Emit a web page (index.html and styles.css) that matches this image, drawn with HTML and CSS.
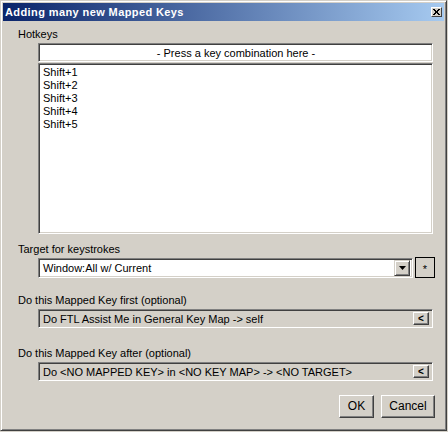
FILE: index.html
```
<!DOCTYPE html>
<html lang="en">
<head>
    <meta charset="UTF-8">
    <title>Adding many new Mapped Keys</title>
    <link rel="stylesheet" href="styles.css">
</head>
<body>
    <div class="window">
        <div class="titlebar">
            <span class="title">Adding many new Mapped Keys</span>
            <span class="close-btn">
                <svg width="7" height="6" viewBox="0 0 7 6">
                    <path d="M0 0 L6 6 M1 0 L7 6 M6 0 L0 6 M7 0 L1 6" stroke="#000" stroke-width="1"/>
                </svg>
            </span>
        </div>

        <div class="content">
            <div class="label hotkeys-label">Hotkeys</div>
            <div class="field white center">- Press a key combination here -</div>
            <div class="listbox">
                <div>Shift+1</div>
                <div>Shift+2</div>
                <div>Shift+3</div>
                <div>Shift+4</div>
                <div>Shift+5</div>
            </div>

            <div class="label target-label">Target for keystrokes</div>
            <div class="combo-row">
                <div class="field white combo">
                    <span class="field-text">Window:All w/ Current</span>
                    <span class="drop-btn">
                        <svg width="7" height="4" viewBox="0 0 7 4"><path d="M0 0 H7 L3.5 4 Z" fill="#000"/></svg>
                    </span>
                </div>
                <div class="plus-btn">*</div>
            </div>

            <div class="label first-label">Do this Mapped Key first (optional)</div>
            <div class="field gray">
                <span class="field-text">Do FTL Assist Me in General Key Map -&gt; self</span>
                <span class="mini-btn">&lt;</span>
            </div>

            <div class="label after-label">Do this Mapped Key after (optional)</div>
            <div class="field gray">
                <span class="field-text">Do &lt;NO MAPPED KEY&gt; in &lt;NO KEY MAP&gt; -&gt; &lt;NO TARGET&gt;</span>
                <span class="mini-btn">&lt;</span>
            </div>

            <div class="buttons">
                <div class="button ok">OK</div>
                <div class="button cancel">Cancel</div>
            </div>
        </div>
    </div>
</body>
</html>
```

FILE: styles.css
```
* {
    box-sizing: border-box;
}
body {
    margin: 0;
    background: #d4d0c8;
    font-family: "Liberation Sans", Arial, sans-serif;
    font-size: 11px;
    color: #000;
}
.window {
    width: 447px;
    height: 431px;
    background: #d4d0c8;
    border: 1px solid;
    border-color: #d4d0c8 #404040 #404040 #d4d0c8;
    box-shadow: inset 1px 1px 0 #fff, inset -1px -1px 0 #808080;
    padding: 2px;
}
.titlebar {
    height: 18px;
    display: flex;
    align-items: center;
    justify-content: space-between;
    padding: 0 2px 0 2px;
    background: linear-gradient(to right, #0a246a, #a6caf0);
}
.title {
    color: #fff;
    font-weight: bold;
    font-size: 11px;
    letter-spacing: 0.4px;
}
.close-btn {
    width: 11px;
    height: 10px;
    display: flex;
    align-items: center;
    justify-content: center;
    background: #d4d0c8;
    border: 1px solid;
    border-color: #fff #404040 #404040 #fff;
}
.content {
    padding: 0 11px 0 15px;
}
.label {
    height: 13px;
    line-height: 13px;
    margin-bottom: 2px;
}
.hotkeys-label {
    margin-top: 7px;
}
.target-label {
    margin-top: 9px;
}
.first-label {
    margin-top: 16px;
}
.after-label {
    margin-top: 19px;
}
.field {
    height: 19px;
    margin-left: 20px;
    display: flex;
    align-items: center;
    border: 1px solid;
    border-color: #808080 #fff #fff #808080;
    box-shadow: inset 1px 1px 0 #404040, inset -1px -1px 0 #d4d0c8;
    padding: 0 3px 0 4px;
    white-space: nowrap;
    overflow: hidden;
}
.field.white {
    background: #fff;
}
.field.gray {
    background: #d4d0c8;
    justify-content: space-between;
}
.field.center {
    justify-content: center;
}
.listbox {
    height: 171px;
    margin: 1px 0 0 20px;
    background: #fff;
    border: 1px solid;
    border-color: #808080 #fff #fff #808080;
    box-shadow: inset 1px 1px 0 #404040, inset -1px -1px 0 #d4d0c8;
    padding: 2px 4px;
    line-height: 13px;
}
.combo-row {
    display: flex;
    gap: 2px;
    margin-right: -2px;
}
.combo {
    flex: 1;
    height: 20px;
    justify-content: space-between;
    padding-right: 2px;
}
.drop-btn {
    width: 16px;
    height: 16px;
    display: flex;
    align-items: center;
    justify-content: center;
    background: #d4d0c8;
    border: 1px solid;
    border-color: #d4d0c8 #404040 #404040 #d4d0c8;
    box-shadow: inset 1px 1px 0 #fff, inset -1px -1px 0 #808080;
}
.plus-btn {
    width: 20px;
    height: 21px;
    margin-top: -1px;
    border: 1px solid #000;
    text-align: center;
    line-height: 22px;
    font-size: 11px;
}
.mini-btn {
    width: 16px;
    height: 13px;
    line-height: 11px;
    text-align: center;
    font-size: 10px;
    font-weight: bold;
    background: #d4d0c8;
    border: 1px solid;
    border-color: #fff #404040 #404040 #fff;
    box-shadow: inset -1px -1px 0 #808080;
}
.buttons {
    display: flex;
    justify-content: flex-end;
    gap: 7px;
    margin-top: 14px;
    margin-right: -2px;
}
.button {
    height: 23px;
    line-height: 21px;
    text-align: center;
    font-size: 12px;
    border: 1px solid;
    border-color: #fff #404040 #404040 #fff;
    box-shadow: inset -1px -1px 0 #808080;
}
.ok {
    width: 35px;
}
.cancel {
    width: 54px;
}
```
